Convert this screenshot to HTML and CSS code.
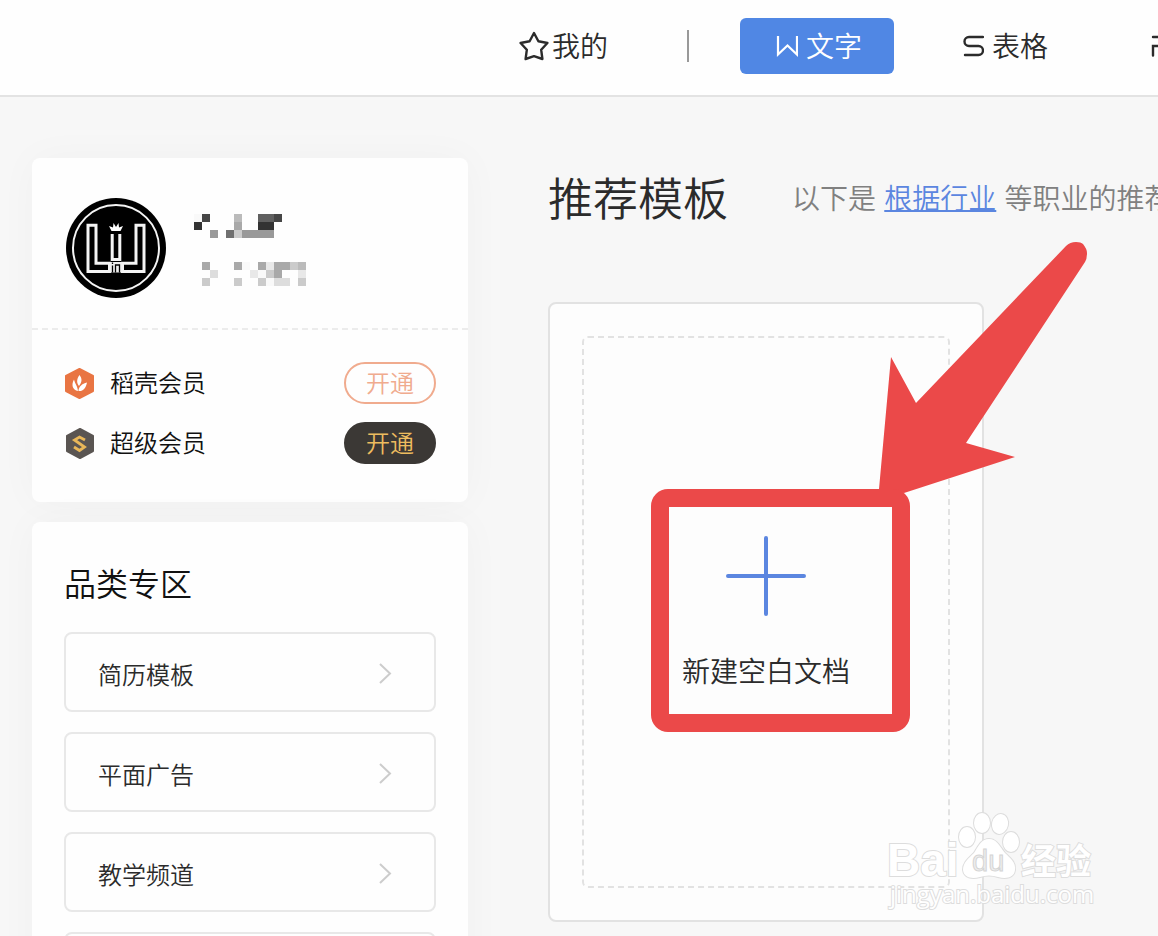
FILE: index.html
```html
<!DOCTYPE html>
<html lang="zh-CN">
<head>
  <meta charset="UTF-8">
  <title>推荐模板</title>
  <link rel="stylesheet" href="styles.css">
</head>
<body>

<header class="topbar">
  <nav class="nav">
    <a class="mine" href="#">
      <svg width="30" height="30" viewBox="0 0 30 30" fill="none" stroke="#2b2b2b" stroke-width="2.4" stroke-linejoin="round">
        <path d="M15 2 L19.4 10.2 L28.4 12 L22.2 18.8 L23.4 28 L15 25.2 L6.6 28 L7.8 18.8 L1.6 12 L10.6 10.2 Z"/>
      </svg>
      <span>我的</span>
    </a>
    <span class="divider"></span>
    <a class="tab active" href="#">
      <svg width="26" height="26" viewBox="0 0 26 26" fill="none" stroke="#fff" stroke-width="2.2">
        <path d="M6 3 V21.5 L15.500 12.5 L25 21.5 V3"/>
      </svg>
      <span>文字</span>
    </a>
    <a class="tab" href="#">
      <svg width="26" height="26" viewBox="0 0 26 26" fill="none" stroke="#2b2b2b" stroke-width="2.4" stroke-linecap="round">
        <path d="M25 4 H11 A4.500 4.500 0 0 0 11 13 H20.500 A4.500 4.500 0 0 1 20.500 22 H7"/>
      </svg>
      <span>表格</span>
    </a>
    <a class="tab" href="#">
      <svg width="26" height="26" viewBox="0 0 26 26" fill="none" stroke="#2b2b2b" stroke-width="2.4" stroke-linecap="round">
        <path d="M9 4 H20 A5 5 0 0 1 20 13 H9 V22.500"/>
      </svg>
      <span>演示</span>
    </a>
  </nav>
</header>

<div class="page">
  <aside class="sidebar">
    <section class="card">
      <div class="profile">
        <svg class="avatar" viewBox="0 0 100 100">
          <circle cx="50" cy="50" r="50" fill="#000"/>
          <g fill="none" stroke="#f4f4f4" stroke-width="3">
            <circle cx="50" cy="50" r="43" stroke-width="2"/>
            <path d="M22 27.300 H30 V65.300 H43.500 V73.500 H22 Z"/>
            <path d="M78 27.300 H70 V65.300 H56.500 V73.500 H78 Z"/>
            <path d="M46.200 36 V61.500 H53.800 V36"/>
          </g>
          <path d="M43 28 L47 29.500 L47.500 25 L50 29 L52.500 25 L53 29.500 L57 28 L54.500 33 H45.500 Z" fill="#fff"/>
          <rect x="44.500" y="64" width="11" height="10.500" fill="#eee"/>
          <path d="M46.500 67.500 V74.500 M46.500 64.500 V66 M49.500 74.500 V67 H53.500 V74.500" fill="none" stroke="#000" stroke-width="1.300"/>
        </svg>
        <!-- blurred name and id -->
        <svg class="mosaic" viewBox="0 0 14 9" shape-rendering="crispEdges">
          <path fill="#333" d="M0 1h1v1h-1z M8 1h2v1h-2z"/>
          <path fill="#464646" d="M1 0h1v1h-1z M10 0h1v1h-1z"/>
          <path fill="#606060" d="M8 0h2v1h-2z"/>
          <path fill="#707070" d="M4 2h1v1h-1z"/>
          <path fill="#999" d="M2 2h1v1h-1z M6 2h4v1h-4z"/>
          <path fill="#a9a9a9" d="M5 1h1v1h-1z M1 6h1v1h-1z M5 6h1v1h-1z M8 6h1v1h-1z M10 6h2v1h-2z M10 7h1v1h-1z"/>
          <path fill="#bbb" d="M5 0h1v1h-1z M13 6h1v1h-1z"/>
          <path fill="#cbcbcb" d="M5 2h1v1h-1z M12 6h1v1h-1z M9 7h1v1h-1z M1 8h1v1h-1z M5 8h1v1h-1z M8 8h1v1h-1z M13 8h1v1h-1z"/>
          <path fill="#ddd" d="M2 7h1v1h-1z M10 8h2v1h-2z"/>
          <path fill="#e8e8e8" d="M9 6h1v1h-1z M7 7h1v1h-1z M13 7h1v1h-1z"/>
          <path fill="#f9f9f9" d="M0 0h1v1h-1z M6 6h1v1h-1z M8 7h1v1h-1z M9 8h1v1h-1z"/>
        </svg>
      </div>
      <ul class="members">
        <li>
          <svg width="30" height="32" viewBox="0 0 30 32">
            <path d="M15.500 2 L29 9 V24 L15.500 31 L2 24 V9 Z" fill="#e97543" stroke="#e97543" stroke-width="2" stroke-linejoin="round"/>
            <path d="M15.500 8 C18.500 12 18 15 15 19 C12.500 16 12.500 12 15.500 8 Z M10 12.500 C11 17 13.500 19 14 24 C8.500 23 7 18 10 12.500 Z M23 15.500 C22 21 19 24.500 14.500 24 C14.500 20 18 16.500 23 15.500 Z" fill="#fff"/>
          </svg>
          <span>稻壳会员</span>
          <button class="open">开通</button>
        </li>
        <li>
          <svg width="30" height="32" viewBox="0 0 30 32">
            <path d="M16 2 L29 9 V24 L16 31 L3 24 V9 Z" fill="#5a5552" stroke="#5a5552" stroke-width="2" stroke-linejoin="round"/>
            <path d="M21 13 L15.500 10 L10.500 13 L20.500 20 L15.500 23.500 L10 20" fill="none" stroke="#e9b759" stroke-width="2.800"/>
          </svg>
          <span>超级会员</span>
          <button class="open dark">开通</button>
        </li>
      </ul>
    </section>

    <section class="card categories">
      <h2>品类专区</h2>
      <a href="#">简历模板<svg width="14" height="22" viewBox="0 0 14 22"><path d="M2 2 L12 11.500 L2 21"/></svg></a>
      <a href="#">平面广告<svg width="14" height="22" viewBox="0 0 14 22"><path d="M2 2 L12 11.500 L2 21"/></svg></a>
      <a href="#">教学频道<svg width="14" height="22" viewBox="0 0 14 22"><path d="M2 2 L12 11.500 L2 21"/></svg></a>
      <a href="#"></a>
    </section>
  </aside>

  <main class="main">
    <div class="title">
      <h1>推荐模板</h1>
      <p>以下是 <a href="#">根据行业</a> 等职业的推荐</p>
    </div>

    <div class="template">
      <a class="blank" href="#">
        <svg width="80" height="80" viewBox="0 0 80 80" stroke="#5b86e0" stroke-width="4" stroke-linecap="round">
          <path d="M40 2 V78 M2 40 H78"/>
        </svg>
        新建空白文档
      </a>
      <svg class="marker" viewBox="0 0 436 490" fill="#eb4949">
        <path d="M415 4 Q419 0 425 0 Q430 0 432 2 Q436 7 436 11 Q436 17 434 20 L315 201 L364 215 L253 251 L228 247 L240 115 L265 161 Z"/>
        <path fill-rule="evenodd" d="M17 247 H242 A17 17 0 0 1 259 264 V473 A17 17 0 0 1 242 490 H17 A17 17 0 0 1 0 473 V264 A17 17 0 0 1 17 247 Z M18 265 V472 H241 V265 Z"/>
      </svg>
      <svg class="watermark" viewBox="0 0 216 104">
        <g fill="#fff" stroke="#ddd" stroke-width="2" paint-order="stroke">
          <text class="wm-logo" x="1" y="66">Bai</text>
          <ellipse cx="81" cy="27" rx="8" ry="10"/>
          <ellipse cx="96" cy="13" rx="8" ry="10"/>
          <ellipse cx="114" cy="14" rx="8" ry="10" transform="rotate(12 114 14)"/>
          <ellipse cx="125" cy="32" rx="8" ry="10"/>
          <path d="M103 29 C111 29 114 37 119 43 C124 48 130 52 129 60 C128 68 120 69 112 67 C106 65 100 65 94 67 C86 69 78 68 77 60 C77 52 83 48 88 43 C92 37 95 29 103 29 Z"/>
          <text class="wm-cn" x="135" y="64">经验</text>
          <text class="wm-url" x="4" y="93">jingyan.baidu.com</text>
        </g>
        <text class="wm-du" x="86" y="61">du</text>
      </svg>
    </div>
  </main>
</div>

</body>
</html>
```
FILE: styles.css
```css
* {
  box-sizing: border-box;
}
body {
  margin: 0;
  font-family: "Noto Sans CJK SC", sans-serif;
  font-weight: 350;
  background: #f7f7f7;
  color: #2b2b2b;
  overflow: hidden;
}
a {
  color: inherit;
  text-decoration: none;
}
h1, h2, p, ul {
  margin: 0;
  padding: 0;
  font-weight: inherit;
}
svg {
  flex: none;
  display: block;
}
.topbar {
  background: #fefefe;
  border-bottom: 2px solid #e3e3e3;
  padding: 18px 0 21px;
}
.nav {
  display: flex;
  align-items: center;
  padding-left: 519px;
  font-size: 28px;
  line-height: 54px;
  white-space: nowrap;
}
.mine {
  display: flex;
  align-items: center;
  gap: 3px;
}
.mine span, .tab span {
  padding-bottom: 2px;
}
.divider {
  flex: none;
  width: 2px;
  height: 32px;
  margin: 0 51px 0 79px;
  background: #999;
}
.tab {
  display: flex;
  align-items: center;
  gap: 8px;
  padding: 0 32px;
  margin-right: 32px;
  border-radius: 6px;
}
.tab.active {
  background: #5087e4;
  color: #fff;
}
.page {
  display: flex;
  gap: 80px;
  padding: 61px 0 0 32px;
}
.sidebar {
  flex: none;
  width: 436px;
}
.card {
  background: #fefefe;
  border-radius: 8px;
  box-shadow: 0 0 40px rgba(0,0,0,0.03);
  margin-bottom: 20px;
}
.profile {
  display: flex;
  align-items: center;
  gap: 28px;
  padding: 40px 34px 30px;
  border-bottom: 2px dashed #ececec;
}
.avatar {
  width: 100px;
  height: 100px;
}
.mosaic {
  width: 112px;
  height: 72px;
  margin-top: 4px;
}
.members {
  list-style: none;
  padding: 32px 32px 38px;
}
.members li {
  display: flex;
  align-items: center;
  gap: 16px;
  font-size: 24px;
  line-height: 40px;
  color: #111;
}
.members span {
  padding-bottom: 2px;
}
.members li + li {
  margin-top: 18px;
}
.open {
  width: 92px;
  height: 42px;
  margin-left: auto;
  padding: 0 0 2px;
  border: 2px solid #f0ab8e;
  border-radius: 21px;
  background: none;
  color: #f0ab8e;
  font: inherit;
  line-height: 36px;
}
.open.dark {
  border-color: #3b3835;
  background: #3b3835;
  color: #edbc5f;
}
.categories {
  padding: 36px 32px;
}
.categories h2 {
  font-size: 32px;
  line-height: 48px;
  margin-bottom: 26px;
  color: #111;
}
.categories a {
  display: flex;
  align-items: center;
  justify-content: space-between;
  height: 80px;
  margin-bottom: 20px;
  padding: 2px 42px 0 32px;
  border: 2px solid #e8e8e8;
  border-radius: 8px;
  font-size: 24px;
}
.categories svg {
  fill: none;
  stroke: #ccc;
  stroke-width: 2;
}
.main {
  flex: 1;
  min-width: 0;
}
.title {
  display: flex;
  align-items: center;
  gap: 64px;
  line-height: 78px;
  margin-bottom: 66px;
  white-space: nowrap;
}
.title h1 {
  font-size: 45px;
}
.title p {
  font-size: 28px;
  color: #808080;
}
.title p a {
  margin: 0 2px;
  color: #5b86e0;
  text-decoration: underline;
  text-decoration-thickness: 2px;
  text-underline-offset: 1px;
  text-decoration-skip-ink: none;
}
.template {
  position: relative;
  width: 436px;
  padding: 32px;
  border: 2px solid #e2e2e2;
  border-radius: 8px;
  background: #fdfdfd;
}
.blank {
  display: flex;
  flex-direction: column;
  align-items: center;
  gap: 34px;
  height: 552px;
  padding-top: 198px;
  border: 2px dashed #e2e2e2;
  border-radius: 6px;
  font-size: 28px;
  line-height: 40px;
}
.marker {
  position: absolute;
  left: 101px;
  top: -62px;
  width: 436px;
  height: 490px;
}
.watermark {
  position: absolute;
  left: 336px;
  top: 506px;
  width: 216px;
  height: 104px;
}
.wm-logo {
  font: bold 46px "Liberation Sans", sans-serif;
}
.wm-cn {
  font: bold 35px "Noto Sans CJK SC", sans-serif;
}
.wm-url {
  font: 24px "Open Sans", sans-serif;
}
.wm-du {
  font: 29px "Liberation Sans", sans-serif;
  fill: #eee;
  stroke: #d4d4d4;
  stroke-width: 1;
}
```
